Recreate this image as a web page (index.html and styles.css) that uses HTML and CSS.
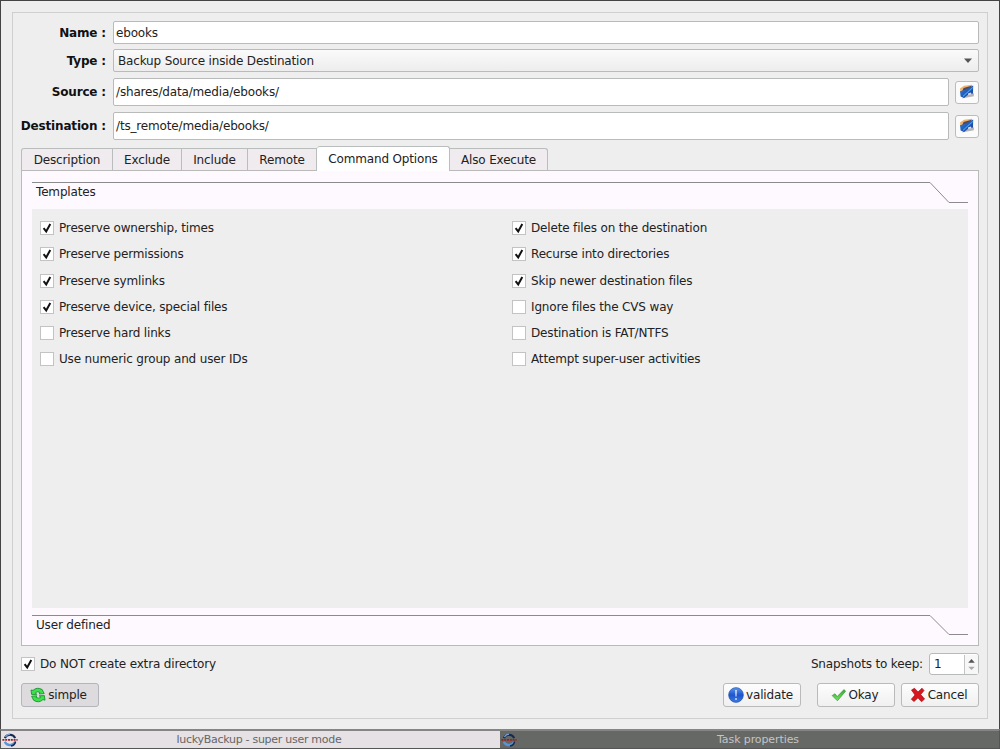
FILE: index.html
```
<!DOCTYPE html>
<html lang="en">
<head>
  <meta charset="UTF-8">
  <title>Task properties</title>
  <link rel="stylesheet" href="styles.css">
</head>
<body>

  <!-- shared icons -->
  <svg class="defs" width="0" height="0">
    <linearGradient id="gBlue" x1="0" y1="0" x2="0" y2="1">
      <stop offset="0" stop-color="#5c97ea"/><stop offset=".5" stop-color="#1c55cf"/><stop offset="1" stop-color="#3f7ae0"/>
    </linearGradient>
    <linearGradient id="gGreen" x1="0" y1="0" x2="0" y2="1">
      <stop offset="0" stop-color="#3fa33c"/><stop offset="1" stop-color="#6ee85c"/>
    </linearGradient>
    <linearGradient id="gFolder" x1="0" y1="0" x2="1" y2="1">
      <stop offset="0" stop-color="#3c86dd"/><stop offset=".5" stop-color="#1f5cbc"/><stop offset="1" stop-color="#1b3a8c"/>
    </linearGradient>
    <symbol id="tick" viewBox="0 0 14 14">
      <path d="M3.6 7.2L6.2 10.4L10.3 3" fill="none" stroke="#111" stroke-width="2"/>
    </symbol>
    <symbol id="folder" viewBox="0 0 16 16">
      <path d="M2.5 14.6L14.8 12.2L15 9.6L12 9Z" fill="#77777f" opacity=".55"/>
      <path d="M1 4.6L5 1.8L13 .8L13.4 4L1.4 8.8Z" fill="#f0b16c"/>
      <path d="M4.6 4L12.6 1.8L11 5L3 7.4Z" fill="#4d4b59"/>
      <path d="M1 7.2L6 6L14.2 1.4L14 9.4L9.5 10.4L5 14L1.6 12.4Z" fill="url(#gFolder)"/>
      <path d="M4 12.4L13.8 3.4" stroke="#4ca0ec" stroke-width="1.1"/>
      <path d="M9 9.6L12 8.4L12.4 10.2L9.2 11Z" fill="#dfe3f2"/>
    </symbol>
    <symbol id="app" viewBox="0 0 16 16">
      <path d="M2.8 6.2A5.7 5.7 0 0 1 13.2 6.2" fill="none" stroke="#17294e" stroke-width="2"/>
      <path d="M3.4 5A5.6 5.6 0 0 1 8 2.2" fill="none" stroke="#78a2d8" stroke-width="1.2"/>
      <path d="M2.8 9.8A5.7 5.7 0 0 0 13.2 9.8" fill="none" stroke="#5b93d8" stroke-width="2.2"/>
      <path d="M9 14A5.8 5.8 0 0 0 13.6 9.5" fill="none" stroke="#17294e" stroke-width="1.4"/>
      <path d="M.4 7.9H15.6" stroke="#9b1f26" stroke-width="1.8" stroke-dasharray="2 .8"/>
    </symbol>
  </svg>

  <main class="dialog">
    <div class="frame">

      <div class="row name-row">
        <label class="caption">Name :</label>
        <div class="field">ebooks</div>
      </div>
      <div class="row type-row">
        <label class="caption">Type :</label>
        <div class="field combo">
          <span>Backup Source inside Destination</span>
          <svg width="8" height="5" viewBox="0 0 8 5"><path d="M0 .5H8L4 5Z" fill="#555"/></svg>
        </div>
      </div>
      <div class="row path-row">
        <label class="caption">Source :</label>
        <div class="field">/shares/data/media/ebooks/</div>
        <button class="browse"><svg width="16" height="16"><use href="#folder"/></svg></button>
      </div>
      <div class="row path-row">
        <label class="caption">Destination :</label>
        <div class="field">/ts_remote/media/ebooks/</div>
        <button class="browse"><svg width="16" height="16"><use href="#folder"/></svg></button>
      </div>

      <nav class="tabs">
        <div class="tab description">Description</div>
        <div class="tab exclude">Exclude</div>
        <div class="tab include">Include</div>
        <div class="tab remote">Remote</div>
        <div class="tab command active">Command Options</div>
        <div class="tab execute">Also Execute</div>
      </nav>

      <section class="pane">
        <div class="section-title">
          <span>Templates</span>
          <svg width="936" height="22"><path d="M0 .5H898L917 20.5H936" fill="none" stroke="#8b8b8b"/></svg>
        </div>
        <div class="options">
          <div class="column">
            <div class="check"><i><svg width="14" height="14"><use href="#tick"/></svg></i><span>Preserve ownership, times</span></div>
            <div class="check"><i><svg width="14" height="14"><use href="#tick"/></svg></i><span>Preserve permissions</span></div>
            <div class="check"><i><svg width="14" height="14"><use href="#tick"/></svg></i><span>Preserve symlinks</span></div>
            <div class="check"><i><svg width="14" height="14"><use href="#tick"/></svg></i><span>Preserve device, special files</span></div>
            <div class="check"><i></i><span>Preserve hard links</span></div>
            <div class="check"><i></i><span>Use numeric group and user IDs</span></div>
          </div>
          <div class="column">
            <div class="check"><i><svg width="14" height="14"><use href="#tick"/></svg></i><span>Delete files on the destination</span></div>
            <div class="check"><i><svg width="14" height="14"><use href="#tick"/></svg></i><span>Recurse into directories</span></div>
            <div class="check"><i><svg width="14" height="14"><use href="#tick"/></svg></i><span>Skip newer destination files</span></div>
            <div class="check"><i></i><span>Ignore files the CVS way</span></div>
            <div class="check"><i></i><span>Destination is FAT/NTFS</span></div>
            <div class="check"><i></i><span>Attempt super-user activities</span></div>
          </div>
        </div>
        <div class="section-title">
          <span>User defined</span>
          <svg width="936" height="22"><path d="M0 .5H898L917 19.5H936" fill="none" stroke="#8b8b8b"/></svg>
        </div>
      </section>

      <div class="extra-row">
        <div class="check"><i><svg width="14" height="14"><use href="#tick"/></svg></i><span>Do NOT create extra directory</span></div>
        <div class="snapshots">
          <span>Snapshots to keep:</span>
          <div class="spin">
            <span>1</span>
            <svg width="14" height="19" viewBox="0 0 14 19">
              <path d="M3.5 7.5H10.5L7 3.5Z" fill="#555"/>
              <path d="M3.5 12H10.5L7 15.5Z" fill="#aaa"/>
            </svg>
          </div>
        </div>
      </div>

      <div class="buttons">
        <button class="btn pressed">
          <svg width="16" height="16" viewBox="0 0 16 16">
            <path d="M1.6 7.4L1 3L3 3.4Q7 -.4 12.2 2.6L14.2 6.6L9.2 7L10 5.4Q7.2 4 5.4 5.8L6.8 7.4Z" fill="#3be24a" stroke="#12872a" stroke-width=".8"/>
            <path d="M14.4 8.6L15 13.2L13 12.6Q8.8 16.6 3.6 13.2L1.6 9.2L6.8 8.8L6 10.4Q9 12 10.8 10.2L9.2 8.8Z" fill="#3be24a" stroke="#12872a" stroke-width=".8"/>
          </svg>
          <span>simple</span>
        </button>
        <button class="btn validate">
          <svg width="16" height="16" viewBox="0 0 16 16">
            <circle cx="8" cy="8" r="7.4" fill="url(#gBlue)" stroke="#1b4da9" stroke-width=".6"/>
            <path d="M7.2 3H8.8L8.5 9.6H7.5Z" fill="#dfe9fb"/><circle cx="8" cy="12" r=".9" fill="#dfe9fb"/>
          </svg>
          <span>validate</span>
        </button>
        <button class="btn okay">
          <svg width="16" height="16" viewBox="0 0 16 16">
            <path d="M1.2 8.6L4 6.8L6.2 9.6L13 2.6L14.6 4.2L6.4 13.8Z" fill="url(#gGreen)" stroke="#379a35" stroke-width=".7"/>
          </svg>
          <span>Okay</span>
        </button>
        <button class="btn cancel">
          <svg width="16" height="16" viewBox="0 0 16 16">
            <path d="M1.5 3L4.5 1.3L8 5L12 1.2L14 3.5L10.7 7.6L14.6 12L11.5 14.7L8 10.8L4 14.5L1.3 12.2L5 8Z" fill="#d9151d" stroke="#a30f16" stroke-width=".7"/>
          </svg>
          <span>Cancel</span>
        </button>
      </div>
    </div>
  </main>

  <footer class="taskbar">
    <div class="task">
      <svg width="16" height="16"><use href="#app"/></svg>
      <span>luckyBackup - super user mode</span>
    </div>
    <div class="task current">
      <svg width="16" height="16"><use href="#app"/></svg>
      <span>Task properties</span>
    </div>
  </footer>

</body>
</html>
```
FILE: styles.css
```
* {
  box-sizing: border-box;
}
body {
  margin: 0;
  width: 1000px;
  height: 749px;
  overflow: hidden;
  background: #eeeeee;
  color: #222;
  font-family: "DejaVu Sans", sans-serif;
  font-size: 12px;
  line-height: 16px;
  letter-spacing: -0.16px;
}
svg {
  display: block;
  flex: none;
}
.defs {
  position: absolute;
}
.dialog {
  height: 729px;
  padding: 11px 11px 10px;
  border: 1px solid #444;
  border-bottom: 0;
}
.frame {
  height: 707px;
  padding: 8px 8px 0;
  border: 1px solid #cfcfcf;
}

/* form rows */
.row {
  display: flex;
  align-items: center;
}
.caption {
  display: flex;
  justify-content: flex-end;
  width: 85px;
  margin-right: 7px;
  font-weight: bold;
  white-space: nowrap;
  color: #111;
}
.field {
  flex: 1;
  display: flex;
  align-items: center;
  height: 100%;
  padding-left: 2px;
  background: #fff;
  border: 1px solid #b9bbba;
  border-radius: 2px;
}
.name-row {
  height: 23px;
}
.type-row {
  height: 23px;
  margin-top: 5px;
}
.combo {
  justify-content: space-between;
  padding: 0 6px 0 4px;
  background: linear-gradient(#fbfafb, #eeedee);
}
.path-row {
  height: 28px;
  margin-top: 6px;
}
.browse {
  display: flex;
  align-items: center;
  justify-content: center;
  width: 24px;
  height: 23px;
  margin-left: 6px;
  padding: 0 1px 1px 0;
  background: #fbfbfb;
  border: 1px solid #bcbcbc;
  border-radius: 3px;
}

/* tabs */
.tabs {
  display: flex;
  align-items: flex-end;
  height: 24px;
  margin-top: 6px;
}
.tab {
  height: 22px;
  padding-top: 3px;
  text-align: center;
  background: #efebef;
  border: 1px solid #b9bdbb;
  border-left-width: 0;
  border-bottom: 0;
}
.description {
  width: 92px;
  border-left-width: 1px;
  border-top-left-radius: 3px;
}
.exclude {
  width: 69px;
}
.include {
  width: 66px;
}
.remote {
  width: 69px;
}
.command {
  width: 133px;
}
.execute {
  width: 98px;
  border-top-right-radius: 3px;
}
.tab.active {
  height: 25px;
  margin-bottom: -1px;
  padding-top: 4px;
  background: #fff;
  border-radius: 3px 3px 0 0;
  z-index: 1;
}
.pane {
  height: 476px;
  padding: 11px 10px 0;
  background: #fdf9fe;
  border: 1px solid #b9bab9;
}
.section-title {
  display: grid;
  height: 27px;
}
.section-title > * {
  grid-area: 1 / 1;
}
.section-title span {
  padding: 2px 0 0 4px;
}
.options {
  display: flex;
  height: 399px;
  margin-bottom: 7px;
  padding: 6px 8px;
  background: #eeeeee;
}
.column {
  flex: none;
  width: 472px;
}
.column:last-child {
  width: 440px;
}
.check {
  display: flex;
  align-items: center;
  height: 26.25px;
}
.check i {
  width: 14px;
  height: 14px;
  margin-right: 5px;
  background: #fff;
  box-shadow: inset 0 0 0 1px #c3c3c3;
}

/* bottom part */
.extra-row {
  display: flex;
  align-items: center;
  justify-content: space-between;
  height: 22px;
  margin-top: 7px;
}
.snapshots {
  display: flex;
  align-items: center;
  gap: 6px;
}
.spin {
  display: flex;
  align-items: center;
  justify-content: space-between;
  width: 50px;
  height: 22px;
  padding-left: 4px;
  background: #fff;
  border: 1px solid #b9bbba;
  border-radius: 3px;
}
.spin svg {
  background: #f7f7f7;
  border-left: 1px solid #c4c4c4;
}
.buttons {
  display: flex;
  margin-top: 8px;
}
.btn {
  display: flex;
  align-items: center;
  justify-content: center;
  gap: 2px;
  width: 78px;
  height: 24px;
  padding: 0 3px 0 0;
  font: inherit;
  letter-spacing: inherit;
  color: #222;
  background: linear-gradient(#fdfdfd, #f1f0f1);
  border: 1px solid #bababa;
  border-radius: 3px;
}
.pressed {
  background: #dddbde;
  border-color: #b3b5bb;
}
.validate {
  margin-left: auto;
}
.okay {
  margin-left: 16px;
}
.cancel {
  margin-left: 6px;
}

/* taskbar */
.taskbar {
  display: flex;
  height: 20px;
  border: 1px solid #555;
  border-top: 2px solid #858585;
}
.task {
  flex: 1;
  display: flex;
  align-items: center;
  padding-left: 1px;
  background: #e5e1e5;
  color: #666;
  font-size: 11px;
  letter-spacing: -0.28px;
}
.task span {
  flex: 1;
  text-align: center;
}
.task.current {
  background: #656865;
  color: #c4c4c4;
  letter-spacing: -0.1px;
}
```
